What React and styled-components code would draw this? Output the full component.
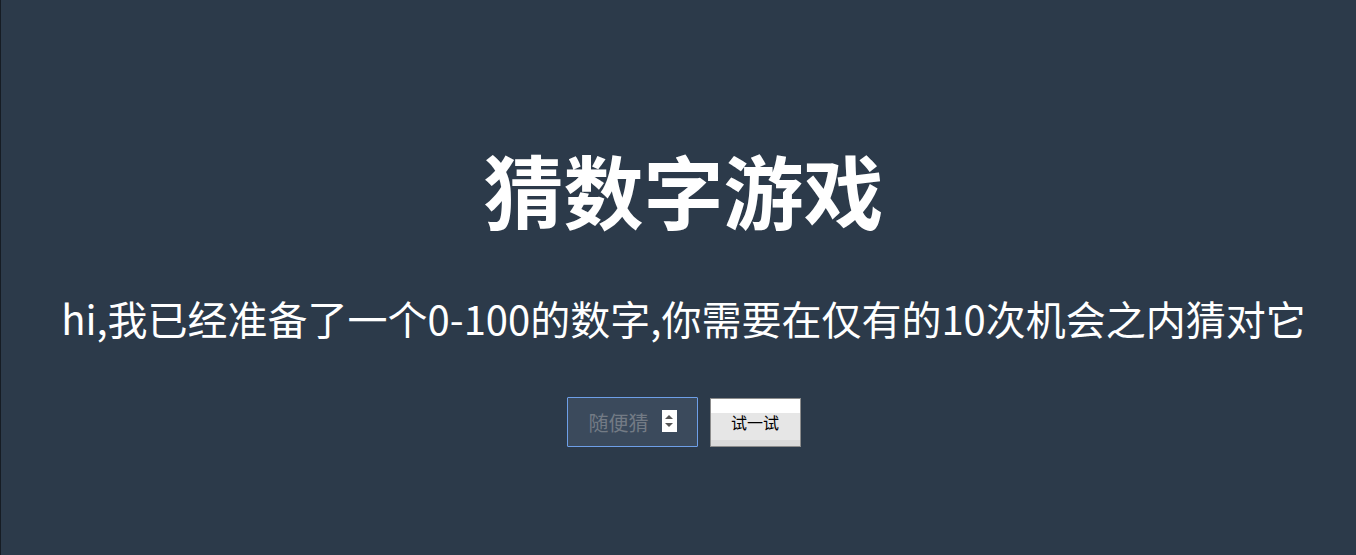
import React from 'react';
import styled, { createGlobalStyle } from 'styled-components';

const GlobalStyle = createGlobalStyle`
  html, body {
    margin: 0;
    padding: 0;
    background: #2c3a4a;
  }
  body {
    font-family: "Microsoft YaHei", "Noto Sans CJK SC", "Noto Sans", sans-serif;
  }
`;

const Page = styled.div`
  min-height: 100vh;
  box-sizing: border-box;
  border-left: 1px solid #161c24;
  background: #2c3a4a;
  color: #fff;
  text-align: center;
  padding: 138px 0 0 10px;
`;

const Title = styled.h1`
  margin: 0;
  font-size: 80px;
  line-height: 100px;
  font-weight: 700;
`;

const Intro = styled.p`
  margin: 54px 0 0;
  font-size: 40px;
  line-height: 52px;
  font-weight: 400;
`;

const GuessRow = styled.div`
  display: flex;
  justify-content: center;
  align-items: center;
  gap: 12px;
  margin-top: 53px;
`;

const InputWrap = styled.div`
  position: relative;
  width: 131px;
  height: 50px;
`;

const GuessInput = styled.input`
  box-sizing: border-box;
  width: 100%;
  height: 100%;
  padding: 0 40px 0 21px;
  border: 1px solid #6e9fe8;
  border-radius: 1px;
  background: #3b4a5c;
  color: #ddd;
  font-family: inherit;
  font-size: 20px;
  outline: none;
  -moz-appearance: textfield;

  &::placeholder {
    color: #737b85;
  }
  &::-webkit-inner-spin-button,
  &::-webkit-outer-spin-button {
    -webkit-appearance: none;
    margin: 0;
  }
`;

const Spinner = styled.span`
  position: absolute;
  right: 21px;
  top: 13px;
  width: 15px;
  height: 22px;
  background: #fff;
  display: flex;
  flex-direction: column;
  align-items: center;
  justify-content: center;
  gap: 4px;
  pointer-events: none;
`;

const Arrow = styled.span`
  width: 0;
  height: 0;
  border-left: 4px solid transparent;
  border-right: 4px solid transparent;
  ${(p) =>
    p.$down
      ? 'border-top: 4px solid #555;'
      : 'border-bottom: 4px solid #555;'}
`;

const TryButton = styled.button`
  box-sizing: border-box;
  width: 91px;
  height: 49px;
  border: 1px solid #8c8c8c;
  background: linear-gradient(
    #ffffff 0,
    #ffffff 30%,
    #e6e6e6 30%,
    #e6e6e6 88%,
    #dadada 88%
  );
  color: #000;
  font-family: inherit;
  font-size: 16px;
  padding: 0;
  cursor: pointer;
`;

export default function App() {
  return (
    <>
      <GlobalStyle />
      <Page>
        <Title>猜数字游戏</Title>
        <Intro>hi,我已经准备了一个0-100的数字,你需要在仅有的10次机会之内猜对它</Intro>
        <GuessRow>
          <InputWrap>
            <GuessInput type="number" placeholder="随便猜" />
            <Spinner>
              <Arrow />
              <Arrow $down />
            </Spinner>
          </InputWrap>
          <TryButton>试一试</TryButton>
        </GuessRow>
      </Page>
    </>
  );
}
